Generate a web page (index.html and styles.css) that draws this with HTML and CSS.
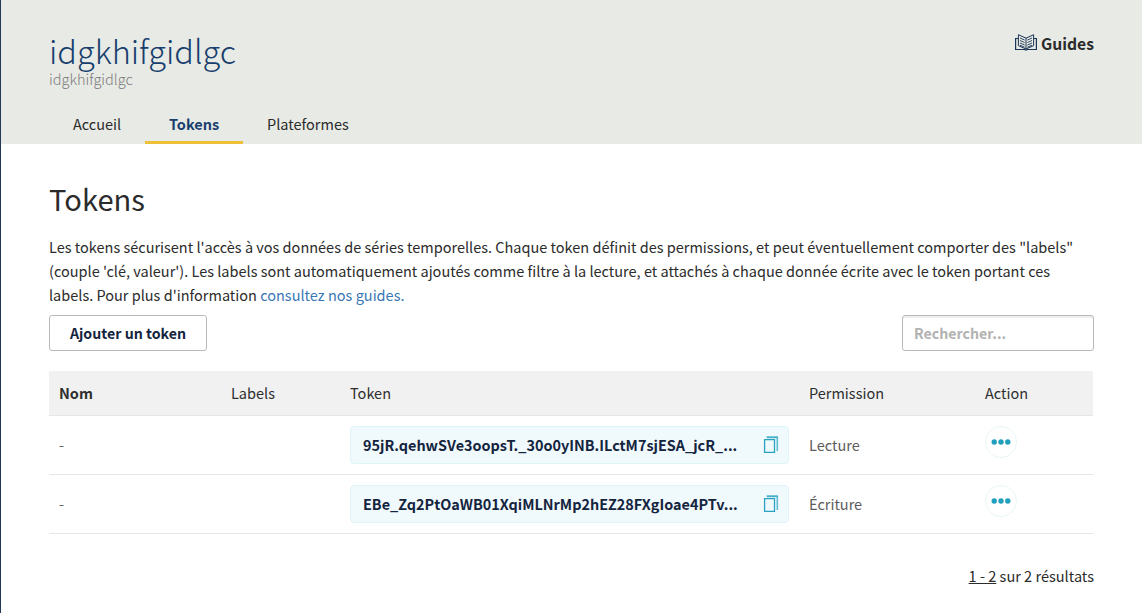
FILE: index.html
```html
<!DOCTYPE html>
<html lang="fr">
<head>
<meta charset="utf-8">
<title>Tokens</title>
<link rel="stylesheet" href="styles.css">
</head>
<body>
<header class="header">
  <div class="header-top">
    <div>
      <h1 class="service-name">idgkhifgidlgc</h1>
      <p class="service-id">idgkhifgidlgc</p>
    </div>
    <a class="guides">
      <svg class="book" width="22" height="17" viewBox="0 0 22 17" fill="none" stroke="#1b3556">
        <path d="M3 4.500H.6v11h8.900l1.500.5 1.500-.5h8.900v-11H19" stroke-width="1.200"/>
        <path d="M11 4.200L3.400.7v11L11 15l7.600-3.300V.7L11 4.200V15" stroke-width="1"/>
        <path d="M5 4l4.600 2M5 6.500l4.600 2M5 9l4.600 2M5 11.200l4.600 2M17 4l-4.600 2M17 6.500l-4.600 2M17 9l-4.600 2M17 11.200l-4.600 2" stroke-width=".9"/>
      </svg>
      <span>Guides</span>
    </a>
  </div>
  <nav class="tabs">
    <a class="tab tab-home">Accueil</a>
    <a class="tab tab-active">Tokens</a>
    <a class="tab">Plateformes</a>
  </nav>
</header>
<main class="content">
  <h2 class="title">Tokens</h2>
  <p class="intro">Les tokens sécurisent l'accès à vos données de séries temporelles. Chaque token définit des permissions, et peut éventuellement comporter des "labels"<br>(couple 'clé, valeur'). Les labels sont automatiquement ajoutés comme filtre à la lecture, et attachés à chaque donnée écrite avec le token portant ces<br>labels. Pour plus d'information <a class="link">consultez nos guides.</a></p>
  <div class="toolbar">
    <button class="add">Ajouter un token</button>
    <input class="search" type="text" placeholder="Rechercher...">
  </div>
  <div class="table">
    <div class="row head">
      <span class="sorted">Nom</span><span>Labels</span><span>Token</span><span>Permission</span><span>Action</span>
    </div>
    <div class="row">
      <span>-</span><span></span>
      <div class="token"><span class="token-value">95jR.qehwSVe3oopsT._30o0yINB.ILctM7sjESA_jcR_...</span>
        <svg class="copy" width="16" height="18" viewBox="0 0 16 18" fill="none"><path d="M4 1.500h10.300V15" stroke="#5fbdd3" stroke-width="1.600"/><path d="M3.500 1h11.500" stroke="#2aa3c2" stroke-width="1"/><path d="M1.600 3.600h9.900v12.800h-9.900z" stroke="#2aa3c2" stroke-width="1.300"/></svg>
      </div>
      <span>Lecture</span>
      <button class="more"><svg width="20" height="6" viewBox="0 0 20 6" fill="#21a0be"><circle cx="3.200" cy="3" r="2.700"/><circle cx="10" cy="3" r="2.700"/><circle cx="16.800" cy="3" r="2.700"/></svg></button>
    </div>
    <div class="row">
      <span>-</span><span></span>
      <div class="token"><span class="token-value">EBe_Zq2PtOaWB01XqiMLNrMp2hEZ28FXgIoae4PTv...</span>
        <svg class="copy" width="16" height="18" viewBox="0 0 16 18" fill="none"><path d="M4 1.500h10.300V15" stroke="#5fbdd3" stroke-width="1.600"/><path d="M3.500 1h11.500" stroke="#2aa3c2" stroke-width="1"/><path d="M1.600 3.600h9.900v12.800h-9.900z" stroke="#2aa3c2" stroke-width="1.300"/></svg>
      </div>
      <span>Écriture</span>
      <button class="more"><svg width="20" height="6" viewBox="0 0 20 6" fill="#21a0be"><circle cx="3.200" cy="3" r="2.700"/><circle cx="10" cy="3" r="2.700"/><circle cx="16.800" cy="3" r="2.700"/></svg></button>
    </div>
  </div>
  <p class="results"><u>1 - 2</u> sur 2 résultats</p>
</main>
</body>
</html>
```
FILE: styles.css
```css
* { box-sizing: border-box; }
body {
  margin: 0;
  height: 613px;
  overflow: hidden;
  border-left: 1px solid #253858;
  background: #fff;
  color: #2b2b2b;
  font: 14.510px/24px "Noto Sans CJK SC", "Noto Sans", sans-serif;
}
h1, h2, p { margin: 0; }
button, input { font: inherit; }
.header {
  height: 144px;
  background: #e8eae5;
  padding: 29px 48px 0;
  display: flex;
  flex-direction: column;
  justify-content: space-between;
}
.header-top { display: flex; justify-content: space-between; }
.service-name { font-size: 32.500px; font-weight: 300; line-height: 42px; color: #183f6d; }
.service-id { font-size: 14.550px; font-weight: 300; line-height: 16px; color: #7c7c7c; }
.guides { display: flex; gap: 4px; height: 30px; align-items: center; font-size: 15.700px; font-weight: 700; }
.book { margin-bottom: 4px; }
.tabs { display: flex; }
.tab { padding: 0 24px; height: 39px; line-height: 38px; border-bottom: 3px solid transparent; }
.tab-home { width: 96px; }
.tab-active { width: 98px; font-weight: 700; color: #183f6d; border-color: #edc037; }
.content { padding: 34px 48px 0; }
.title { font-size: 29.100px; font-weight: 400; line-height: 40px; margin-bottom: 17px; }
.intro { white-space: nowrap; height: 80px; }
.link { color: #3a77b5; }
.toolbar { display: flex; justify-content: space-between; }
.add {
  width: 158px; height: 36px; padding: 0;
  border: 1px solid #b9b9b9; border-radius: 3px;
  background: #fff; color: #14243e; font-size: 14.200px; font-weight: 700;
}
.search {
  width: 192px; height: 36px; padding: 0 11px;
  border: 1px solid #b9b9b9; border-radius: 3px;
  box-shadow: inset 0 2px 1px #eee; font-size: 14.200px; font-weight: 700; outline: none;
}
.search::placeholder { color: #b2b2b2; opacity: 1; }
.table { margin-top: 20px; width: 1044px; }
.row {
  display: grid;
  grid-template-columns: 172px 119px 459px 176px 1fr;
  align-items: center;
  height: 59px;
  padding-left: 10px;
  border-bottom: 1px solid #e6e6e6;
  color: #5c5c5c;
}
.head { height: 45px; background: #f1f1f1; color: #2e2e2e; }
.sorted { font-weight: 700; }
.token {
  width: 439px; height: 38px; padding: 0 9px 0 12px;
  display: flex; align-items: center; justify-content: space-between;
  border: 1px solid #dff5fa; border-radius: 4px;
  background: #f0f9fc;
}
.token-value { font-size: 14.420px; font-weight: 700; color: #14243e; white-space: nowrap; }
.more {
  width: 32px; height: 32px; padding: 1px 0 0; margin-bottom: 7px;
  display: flex; align-items: center; justify-content: center;
  border: 1px solid #e9f6f7; border-radius: 50%; background: #fff;
}
.results { margin-top: 30px; text-align: right; font-size: 14.550px; }
```
